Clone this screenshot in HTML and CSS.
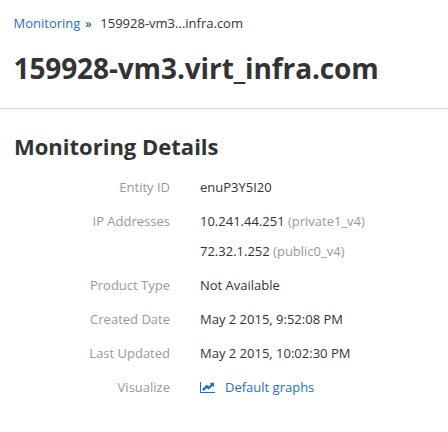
FILE: index.html
```html
<!DOCTYPE html>
<html lang="en">
<head>
<meta charset="utf-8">
<title>Monitoring</title>
<link rel="stylesheet" href="styles.css">
</head>
<body>
<header class="page-header">
  <nav class="breadcrumb"><a href="#">Monitoring</a><span class="sep">»</span><span class="current">159928-vm3...infra.com</span></nav>
  <h1>159928-vm3.virt_infra.com</h1>
</header>
<main class="details">
  <h2>Monitoring Details</h2>
  <dl>
    <dt>Entity ID</dt><dd>enuP3Y5I20</dd>
    <dt>IP Addresses</dt><dd><div class="line">10.241.44.251 <span class="muted">(private1_v4)</span></div><div class="line">72.32.1.252 <span class="muted">(public0_v4)</span></div></dd>
    <dt>Product Type</dt><dd>Not Available</dd>
    <dt>Created Date</dt><dd>May 2 2015, 9:52:08 PM</dd>
    <dt>Last Updated</dt><dd>May 2 2015, 10:02:30 PM</dd>
    <dt>Visualize</dt><dd><a href="#" class="graph-link"><svg class="icon" viewBox="0 0 15 12"><path d="M0 1h1v10h14v1H0z"/><path d="M14 2v3.700c0 .25-.25.33-.42.17l-1-1L8.900 8.500c-.1.1-.25.1-.35 0L6.800 6.900 3.700 9.900 2 8.200l4.600-4.400c.1-.1.25-.1.35 0l1.800 1.700 2.300-2.300-.9-.9c-.16-.17-.08-.550.17-.550h3.400c.14 0 .28.110.28.250z"/></svg>Default graphs</a></dd>
  </dl>
</main>
</body>
</html>
```
FILE: styles.css
```css
body {
  margin: 0;
  background: #fff;
  color: #333;
  font: 13px/20px "Open Sans", sans-serif;
}
a { color: #1f6fc6; text-decoration: none; }
.page-header {
  box-sizing: border-box;
  height: 109px;
  padding: 13px 14px 0 13.5px;
  border-bottom: 1px solid #d9d9d9;
}
.breadcrumb { display: flex; }
.sep { margin: 0 8.500px 0 5px; }
h1 { margin: 15px 0 0; font-size: 28px; line-height: 40px; font-weight: 700; letter-spacing: -0.11px; }
.details { padding: 22px 14px 0; }
h2 { margin: 0 0 16px; font-size: 22px; line-height: 30px; font-weight: 700; }
dl {
  display: grid;
  grid-template-columns: 156px 1fr;
  column-gap: 30px;
  row-gap: 14px;
  margin: 0;
}
dt { color: #999; text-align: right; }
dd { margin: 0; }
.line + .line { margin-top: 10px; }
.muted { color: #999; }
.graph-link { display: flex; align-items: center; }
.icon { width: 15px; height: 12px; margin-right: 10px; fill: currentColor; }
```
